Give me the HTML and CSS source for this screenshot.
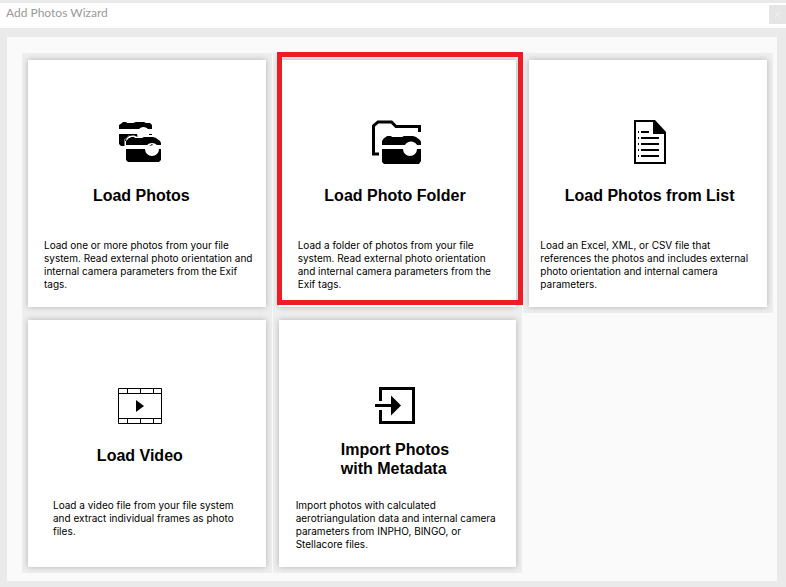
FILE: index.html
```
<!DOCTYPE html>
<html lang="en">
<head>
  <meta charset="UTF-8">
  <meta name="viewport" content="width=device-width, initial-scale=1.0">
  <title>Add Photos Wizard</title>
  <link rel="stylesheet" href="styles.css">
</head>
<body>
  <header class="titlebar">
    <h1>Add Photos Wizard</h1>
    <button class="close" aria-label="Close">
      <svg width="5" height="5" viewBox="0 0 5 5"><path d="M0 0l5 5M5 0L0 5"/></svg>
    </button>
  </header>

  <main class="panel">
    <div class="cell">
      <button class="card photos">
        <svg class="icon" viewBox="0 0 52 44">
          <path d="M5 9V5l3-2 1-1h3l1 1h6l3-1h8l2 1h4l2 2v4h-4a6 6 0 0 0-9 0z"/>
          <path d="M5 14h18q0 2 2 4v8H7l-2-2z"/>
          <path d="M35 14h3v1h-3z"/>
          <path class="halo" d="M12 25v-5l3-3h5l2 1h6l2-1h9l4 2 4 2v4v15H12z"/>
          <path class="thin" d="M11.500 21q0-5 7-6.500"/>
          <path d="M12 25v-4l3-3h1l1-1h3l1 1h7l2-1h9l3 1 4 3 1 2v2h-4a7 7 0 0 0-10 0z"/>
          <path d="M12 29h19a7 7 0 0 0 14 0h2v11l-2 2H14l-2-2z"/>
          <path d="M35 26l3-2 1 1z"/>
        </svg>
        <span class="name">Load Photos</span>
        <span class="text">Load one or more photos from your file<br>system. Read external photo orientation and<br>internal camera parameters from the Exif<br>tags.</span>
      </button>
    </div>

    <div class="cell highlight">
      <button class="card folder">
        <svg class="icon" viewBox="0 0 52 44">
          <path class="thick" d="M9 34H3.500V6L8 2h13.500L26 6.500h23.500V12"/>
          <path d="M12 25v-4l2-3 2-1 1-1h4l1 1h10l2-1h9l3 1 4 3 1 2v3h-4a7 7 0 0 0-12 0z"/>
          <path d="M12 29h21a7 7 0 0 0 14 0h4v12l-2 3H14l-2-2z"/>
        </svg>
        <span class="name">Load Photo Folder</span>
        <span class="text">Load a folder of photos from your file<br>system. Read external photo orientation<br>and internal camera parameters from the<br>Exif tags.</span>
      </button>
    </div>

    <div class="cell">
      <button class="card list">
        <svg class="icon" viewBox="0 0 52 44">
          <path class="line" d="M11 1h19l11 12v30H11z"/>
          <path d="M29 0h2l11 12v2H29z"/>
          <path class="line" d="M17 12h8M17 18h18M17 24h18M17 30h18M17 36h18"/>
          <path class="line" d="M14 12h1M14 18h1M14 24h1M14 30h1M14 36h1"/>
        </svg>
        <span class="name">Load Photos from List</span>
        <span class="text">Load an Excel, XML, or CSV file that<br>references the photos and includes external<br>photo orientation and internal camera<br>parameters.</span>
      </button>
    </div>

    <div class="cell">
      <button class="card video">
        <svg class="icon" viewBox="0 0 52 44">
          <path class="thin" d="M4.500 8.500h43v35h-43zM4.500 13.500h43M4.500 38.500h43"/>
          <path class="thin" d="M13.500 9v4M26.500 9v4M39.500 9v4M13.500 39v4M26.500 39v4M39.500 39v4"/>
          <path d="M22 20l8 6-8 6z"/>
        </svg>
        <span class="name">Load Video</span>
        <span class="text">Load a video file from your file system<br>and extract individual frames as photo<br>files.</span>
      </button>
    </div>

    <div class="cell">
      <button class="card import">
        <svg class="icon" viewBox="0 0 52 44">
          <path class="thick" d="M11.500 21V8.500h33v34h-33V30"/>
          <path class="thick" d="M6 25.500h17"/>
          <path d="M22 15.500l10 10-10 10z"/>
        </svg>
        <span class="name two-lines">Import Photos<br>with Metadata</span>
        <span class="text">Import photos with calculated<br>aerotriangulation data and internal camera<br>parameters from INPHO, BINGO, or<br>Stellacore files.</span>
      </button>
    </div>
  </main>
</body>
</html>
```

FILE: styles.css
```
* {
  box-sizing: border-box;
}

body {
  margin: 0;
  padding-bottom: 6px;
  border-top: 3px solid #eaeaea;
  background-color: #eaeaea;
  font-family: "Liberation Sans", Arial, sans-serif;
}

.titlebar {
  display: flex;
  justify-content: space-between;
  align-items: flex-start;
  height: 25px;
  padding-top: 2px;
  padding-left: 6px;
  background-color: white;
}

.titlebar h1 {
  margin: 0;
  font-family: Lato, sans-serif;
  font-size: 12px;
  font-weight: normal;
  line-height: 16px;
  color: #999;
}

.close {
  display: flex;
  justify-content: center;
  align-items: center;
  width: 17px;
  height: 19px;
  padding: 0;
  border: none;
  background-color: #e5e5e5;
}

.close path {
  stroke: #f5f5f5;
  stroke-width: 1;
}

.panel {
  display: grid;
  grid-template-columns: repeat(3, 1fr);
  column-gap: 1px;
  margin: 9px 9px 0 7px;
  padding: 16px 4px 8px 15px;
  background-color: #fafafa;
}

.cell {
  position: relative;
  padding: 7px 6px 6px;
  background-color: #eee;
}

/* red frame over the selected card */
.highlight::after {
  content: "";
  position: absolute;
  top: -1px;
  right: -1px;
  bottom: 8px;
  left: 4px;
  border: 5px solid #ee1c25;
  pointer-events: none;
}

.card {
  display: flex;
  flex-direction: column;
  align-items: center;
  width: 100%;
  min-height: 247px;
  padding: 60px 0 16px;
  border: none;
  background-color: white;
  box-shadow: 0 0 6px rgba(0, 0, 0, 0.25);
  color: black;
  font-family: inherit;
  text-align: left;
  cursor: pointer;
}

.icon {
  width: 52px;
  height: 44px;
}

.icon .thin,
.icon .line,
.icon .thick {
  fill: none;
  stroke: black;
}

.icon .thin {
  stroke-width: 1;
}

.icon .line {
  stroke-width: 2;
}

.icon .thick {
  stroke-width: 3;
}

.icon .halo {
  fill: white;
  stroke: white;
  stroke-width: 3;
}

.name {
  min-height: 75px;
  padding-top: 22px;
  font-size: 16px;
  font-weight: bold;
  line-height: 19px;
}

.two-lines {
  padding-top: 16px;
}

.text {
  align-self: flex-start;
  font-family: Inter, "Liberation Sans", sans-serif;
  font-size: 10px;
  line-height: 13px;
  white-space: nowrap;
}

.photos .icon,
.video .icon,
.video .name {
  margin-right: 14px;
}

.photos .name {
  margin-right: 11px;
}

.folder .name,
.import .icon,
.import .name {
  margin-right: 5px;
}

.folder .icon {
  margin-right: 2px;
}

.list .icon,
.list .name {
  margin-left: 3px;
}

.photos .text {
  margin-left: 16px;
}

.import .text {
  margin-left: 17px;
}

.folder .text {
  margin-left: 19px;
}

.list .text {
  margin-left: 11px;
}

.video .text {
  margin-left: 25px;
}
```
